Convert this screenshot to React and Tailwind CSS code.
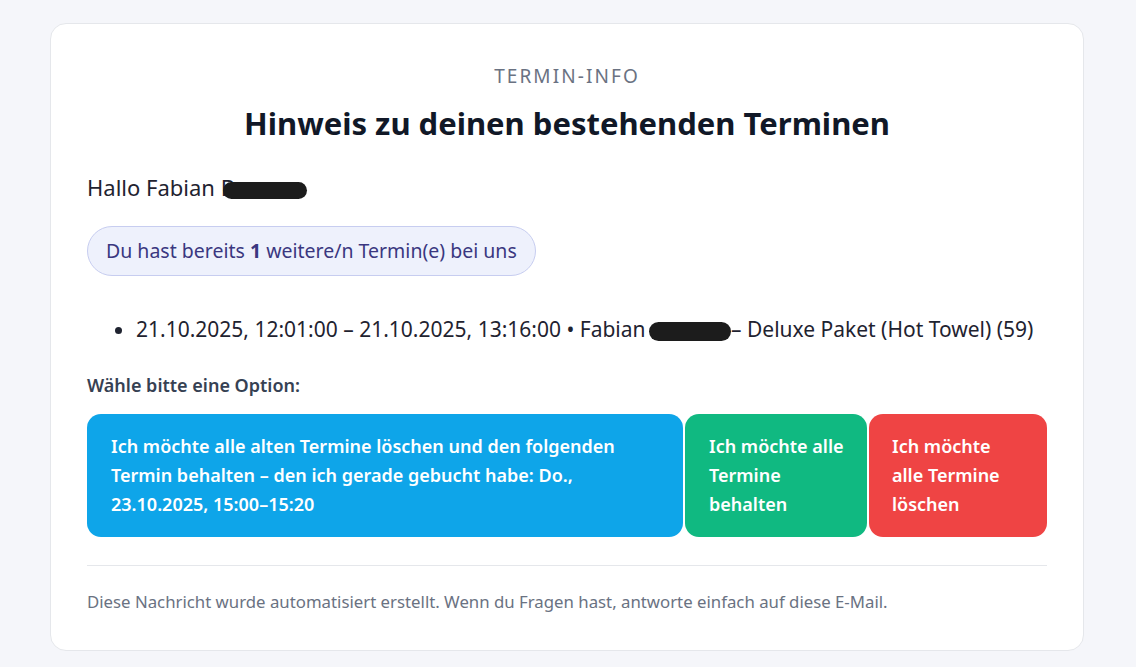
const Redacted = ({ className }) => (
    <span className={`inline-block bg-[#1c1c1c] rounded-full align-middle ${className}`} />
);

export default function App() {
    return (
        <div className="min-h-screen bg-[#f5f6fa] pt-[23px] font-['Noto_Sans',sans-serif] text-gray-900">
            <div className="ml-[50px] w-[1034px] rounded-2xl border border-gray-200 bg-white px-[36px] pt-[38px] pb-[36px]">
                <div className="text-center text-[19px] leading-[28px] tracking-[0.11em] text-gray-500">TERMIN-INFO</div>
                <h1 className="mt-[12px] text-center text-[31px] leading-[42px] font-bold text-[#111827]">
                    Hinweis zu deinen bestehenden Terminen
                </h1>

                <p className="mt-[27px] text-[22px] leading-[32px] text-[#1f2330]">
                    Hallo Fabian B<Redacted className="-ml-[12px] w-[84px] h-[17px] mt-[1px]" />
                </p>

                <div className="mt-[23px] inline-flex h-[50px] items-center rounded-full border border-[#c7cdf0] bg-[#eef1fc] px-[18px] text-[19.5px] text-[#3a3780]">
                    <span>Du hast bereits <b className="font-bold">1</b> weitere/n Termin(e) bei uns</span>
                </div>

                <ul className="mt-[38px] list-disc pl-[49px] text-[21px] leading-[30px] text-[#1f2330] marker:text-[#1f2330]">
                    <li>
                        21.10.2025, 12:01:00 – 21.10.2025, 13:16:00 • Fabian <Redacted className="-ml-[2px] w-[82px] h-[19px]" />– Deluxe Paket (Hot Towel) (59)
                    </li>
                </ul>

                <p className="mt-[28px] text-[18px] leading-[26px] font-semibold text-gray-700">Wähle bitte eine Option:</p>

                <div className="mt-[16px] flex gap-[2px] text-[18px] leading-[29px] font-semibold text-white">
                    <div className="w-[596px] rounded-[14px] bg-[#0ea5e9] px-[24px] pt-[18px] pb-[18px]">
                        Ich möchte alle alten Termine löschen und den folgenden Termin behalten – den ich gerade gebucht habe: Do., 23.10.2025, 15:00–15:20
                    </div>
                    <div className="w-[182px] rounded-[14px] bg-[#10b981] pl-[24px] pr-[16px] pt-[18px] pb-[18px]">
                        Ich möchte alle Termine behalten
                    </div>
                    <div className="w-[178px] rounded-[14px] bg-[#ef4444] px-[23px] pt-[18px] pb-[18px]">
                        Ich möchte alle Termine löschen
                    </div>
                </div>

                <hr className="mt-[28px] border-gray-200" />

                <p className="mt-[24px] text-[16.8px] leading-[24px] text-gray-500">
                    Diese Nachricht wurde automatisiert erstellt. Wenn du Fragen hast, antworte einfach auf diese E-Mail.
                </p>
            </div>
        </div>
    );
}
